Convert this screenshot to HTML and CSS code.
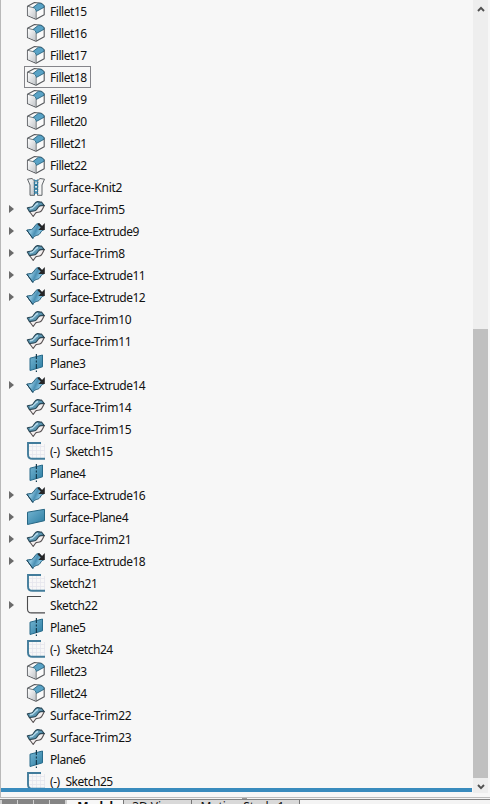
FILE: index.html
```html
<!DOCTYPE html>
<html lang="en">
<head>
<meta charset="utf-8">
<title>Feature tree</title>
<link rel="stylesheet" href="styles.css">
</head>
<body>
<svg class="defs" width="0" height="0">
  <defs>
    <linearGradient id="blue" x1="0" y1="0" x2="1" y2="1"><stop offset="0" stop-color="#75b5d2"/><stop offset="1" stop-color="#2c7da2"/></linearGradient>
    <linearGradient id="wave" x1="0" y1="0.2" x2="1" y2="0.6"><stop offset="0" stop-color="#3f86a8"/><stop offset=".3" stop-color="#8cc4df"/><stop offset=".55" stop-color="#4a90b4"/><stop offset=".8" stop-color="#84c2e0"/><stop offset="1" stop-color="#3d86aa"/></linearGradient>
    <linearGradient id="side" x1="0" y1="0" x2="1" y2="1"><stop offset="0" stop-color="#fff"/><stop offset="1" stop-color="#bfc3c7"/></linearGradient>
  </defs>
  <symbol id="fillet" viewBox="0 0 20 20">
    <path d="M1.500 5.200 8.500 1.500l6.500.7 3.200 2.700v8.800L10 18.300l-8.500-3.800z" fill="#fafafa" stroke="#55585c" stroke-width="1.100" stroke-linejoin="round"/>
    <path d="M1.800 5.600 7.500 7.300 10 10.300v7.500l-8.200-3.500z" fill="url(#side)"/>
    <path d="M7 6.500 12.500 2.200c3.500-.1 5.400 1.300 5.700 4L10.200 10.500C10 8.500 9 7 7 6.500z" fill="#5aa3c6" stroke="#2a6480" stroke-width=".9"/>
    <path d="M2 5.400l5 1.200M10.200 10.500v7.500" fill="none" stroke="#6a6f73" stroke-width=".9"/>
  </symbol>
  <symbol id="knit" viewBox="0 0 20 20">
    <path d="M1.500 2.200 6 1.500l2.300 2.200.2 14.600H4V8z" fill="url(#side)" stroke="#61666a"/>
    <path d="M18.500 2.200 14 1.500l-2.300 2.200-.2 14.600H16V8z" fill="#f4f4f4" stroke="#61666a"/>
    <path d="M8 2.700l4.200 3M12 2.700l-4 3M8 6.500l4.200 3M12 6.500l-4 3M8 10.300l4.200 3M12 10.300l-4 3M8 14.100l4.200 3M12 14.100l-4 3" stroke="#287ca4" stroke-width="1.200"/>
  </symbol>
  <symbol id="trim" viewBox="0 0 20 20">
    <path d="M3.500 12.500c2.500-1.300 4 .2 5.500-2 1.500-2.200 3-4.500 5.500-4.200 1.500.2 2.500.5 4 .2-1.500 2-1.800 4.500-3.800 6-2 1.500-3.700-.1-5.200 1.700L7.200 17.500z" fill="#f4efef" stroke="#555051" stroke-width="1.100" stroke-linejoin="round"/>
    <path d="M1.300 9c2-1.500 4 .1 5.500-1.700C8.300 5.500 9 3 11.300 2.600c1.700-.2 2.500.9 4.200.4l2.700 3.500c-2.700-.4-4.700-.4-6 1.700-1.500 2.500-2.200 4-4.700 3.800-1.500-.1-2.500 0-4 .7z" fill="#5c97b3" stroke="#2a4756" stroke-width="1.100" stroke-linejoin="round"/>
    <path d="M4 9.800c4.500.2 4.500-4.600 8-5.200" fill="none" stroke="#b4d8e8" stroke-width="1.500"/>
  </symbol>
  <symbol id="extrude" viewBox="0 0 20 20">
    <path d="M.8 9.200c2.200-1.200 4.400.3 6.200-1.700 1.700-2 2.500-4.500 5-4.900l1.500.2 4.300 6.100c-2.700.2-3 3.300-4.900 4.700-2 1.300-3.700.2-6.100 3.900z" fill="url(#wave)" stroke="#28607c" stroke-width="1" stroke-linejoin="round"/>
    <path d="M6.800 17.400.8 9.200" stroke="#1f4459" stroke-width="1"/>
    <path d="m12.300 2.700 4.200 4" stroke="#252527" stroke-width="2"/>
    <path d="M18.800 2v7h-6.500z" fill="#252527"/>
  </symbol>
  <symbol id="plane" viewBox="0 0 20 20">
    <path d="M4 5.200 16.500 2v11.800L4 17.500z" fill="url(#blue)" stroke="#286b8b"/>
    <path d="M10.400 1v18" stroke="#153c50" stroke-width="1.200" stroke-dasharray="5 1.500 2 1.500"/>
  </symbol>
  <symbol id="surface" viewBox="0 0 20 20">
    <path d="M1.500 5.200 18.500 2.300v11.400l-17 3.800z" fill="url(#blue)" stroke="#286784"/>
  </symbol>
  <symbol id="sketch" viewBox="0 0 20 20">
    <path d="M6.500 3v14M10.500 3v14M14.500 3v14M18.500 3v14M2 5.500h17M2 9.500h17M2 13.500h17" stroke="#e4e4ec" stroke-width=".8"/>
    <path d="M15 2H2v11.500c0 3 1.500 4.300 4.500 4.300H19" fill="none" stroke="#427c9b" stroke-width="1.900"/>
  </symbol>
  <symbol id="used" viewBox="0 0 20 20">
    <path d="M15 1.500H1.500V14c0 2.600 1.400 3.900 4 3.900H19" fill="none" stroke="#4b4b4d" stroke-width="1.100"/>
  </symbol>
</svg>
<div class="app">
  <main class="panel">
    <ul class="tree">
      <li><i></i><svg><use href="#fillet"/></svg><span>Fillet15</span></li>
      <li><i></i><svg><use href="#fillet"/></svg><span>Fillet16</span></li>
      <li><i></i><svg><use href="#fillet"/></svg><span>Fillet17</span></li>
      <li><i></i><div class="focused"><svg><use href="#fillet"/></svg><span>Fillet18</span></div></li>
      <li><i></i><svg><use href="#fillet"/></svg><span>Fillet19</span></li>
      <li><i></i><svg><use href="#fillet"/></svg><span>Fillet20</span></li>
      <li><i></i><svg><use href="#fillet"/></svg><span>Fillet21</span></li>
      <li><i></i><svg><use href="#fillet"/></svg><span>Fillet22</span></li>
      <li class="trim"><i></i><svg><use href="#knit"/></svg><span>Surface-Knit2</span></li>
      <li class="parent trim"><i></i><svg><use href="#trim"/></svg><span>Surface-Trim5</span></li>
      <li class="parent extrude"><i></i><svg><use href="#extrude"/></svg><span>Surface-Extrude9</span></li>
      <li class="parent trim"><i></i><svg><use href="#trim"/></svg><span>Surface-Trim8</span></li>
      <li class="parent extrude"><i></i><svg><use href="#extrude"/></svg><span>Surface-Extrude11</span></li>
      <li class="parent extrude"><i></i><svg><use href="#extrude"/></svg><span>Surface-Extrude12</span></li>
      <li class="trim"><i></i><svg><use href="#trim"/></svg><span>Surface-Trim10</span></li>
      <li class="trim"><i></i><svg><use href="#trim"/></svg><span>Surface-Trim11</span></li>
      <li><i></i><svg><use href="#plane"/></svg><span>Plane3</span></li>
      <li class="parent extrude"><i></i><svg><use href="#extrude"/></svg><span>Surface-Extrude14</span></li>
      <li class="trim"><i></i><svg><use href="#trim"/></svg><span>Surface-Trim14</span></li>
      <li class="trim"><i></i><svg><use href="#trim"/></svg><span>Surface-Trim15</span></li>
      <li><i></i><svg><use href="#sketch"/></svg><span>(-) Sketch15</span></li>
      <li><i></i><svg><use href="#plane"/></svg><span>Plane4</span></li>
      <li class="parent extrude"><i></i><svg><use href="#extrude"/></svg><span>Surface-Extrude16</span></li>
      <li class="parent"><i></i><svg><use href="#surface"/></svg><span>Surface-Plane4</span></li>
      <li class="parent trim"><i></i><svg><use href="#trim"/></svg><span>Surface-Trim21</span></li>
      <li class="parent extrude"><i></i><svg><use href="#extrude"/></svg><span>Surface-Extrude18</span></li>
      <li><i></i><svg><use href="#sketch"/></svg><span>Sketch21</span></li>
      <li class="parent"><i></i><svg><use href="#used"/></svg><span>Sketch22</span></li>
      <li><i></i><svg><use href="#plane"/></svg><span>Plane5</span></li>
      <li><i></i><svg><use href="#sketch"/></svg><span>(-) Sketch24</span></li>
      <li><i></i><svg><use href="#fillet"/></svg><span>Fillet23</span></li>
      <li><i></i><svg><use href="#fillet"/></svg><span>Fillet24</span></li>
      <li class="trim"><i></i><svg><use href="#trim"/></svg><span>Surface-Trim22</span></li>
      <li class="trim"><i></i><svg><use href="#trim"/></svg><span>Surface-Trim23</span></li>
      <li><i></i><svg><use href="#plane"/></svg><span>Plane6</span></li>
      <li><i></i><svg><use href="#sketch"/></svg><span>(-) Sketch25</span></li>
    </ul>
    <div class="scrollbar">
      <svg class="arrow up" viewBox="0 0 8 6"><path d="M1 5 4 1.800 7 5"/></svg>
      <div class="track"><div class="thumb"></div></div>
      <svg class="arrow down" viewBox="0 0 8 6"><path d="M1 1 4 4.200 7 1"/></svg>
    </div>
  </main>
  <div class="splitter"><b></b></div>
  <footer class="tabs">
    <div class="nav"><b></b><b></b><b></b><b></b></div>
    <div class="tab model">Model</div>
    <div class="tab views">3D Views</div>
    <div class="tab motion">Motion Study 1</div>
  </footer>
</div>
</body>
</html>
```
FILE: styles.css
```css
* { box-sizing: border-box; }
body { margin: 0; background: #f7f7f7; color: #111; font: 12px/22px "Noto Sans", "Open Sans", sans-serif; }
.defs { display: block; }
.app { display: flex; flex-direction: column; width: 490px; height: 804px; overflow: hidden; }
.panel { display: flex; height: 797px; border-left: 1px solid #b9b9b9; }
.tree { width: 471px; height: 792px; margin: 0; padding: 1px 0 0; list-style: none; overflow: hidden; border-bottom: 4px solid #398bbd; }
.tree li { display: flex; height: 22px; align-items: center; }
.tree i { width: 25px; height: 22px; flex: none; display: flex; align-items: center; padding: 0 0 2px 8px; }
.parent i::before { content: ""; border: 4px solid transparent; border-left: 5px solid #6a6a6a; border-right: 0; }
.tree svg { width: 20px; height: 20px; flex: none; margin-top: -2px; }
.tree span { margin-left: 4px; white-space: nowrap; letter-spacing: -0.45px; word-spacing: 3px; }
.tree .trim span { letter-spacing: -0.24px; }
.tree .extrude span { letter-spacing: -0.51px; }
.focused { display: flex; align-items: center; height: 22px; width: 67px; margin: -2px 0 0 -2px; padding: 1px 0 0 1px; border: 1px solid #85858a; }
.scrollbar { width: 15px; height: 793px; margin-left: 1px; background: #eee; display: flex; flex-direction: column; align-items: center; }
.arrow { width: 8px; height: 6px; flex: none; fill: none; stroke: #505050; stroke-width: 1.900; }
.up { margin: 6px 0 4px; }
.down { margin: 6px 0 4px; }
.track { flex: 1; width: 15px; padding-top: 313px; }
.thumb { height: 449px; background: #c0c0c0; }
.splitter { height: 3px; flex: none; border-top: 1px solid #bcbcbc; border-bottom: 1px solid #858585; background: #f5f5f5; display: flex; }
.splitter b { width: 5px; height: 1px; margin-left: 242px; background: #999; }
.tabs { display: flex; height: 4px; overflow: hidden; background: #f4f4f4; font: 12px/14px "Noto Sans", sans-serif; }
.nav { width: 67px; display: flex; gap: 1px; padding-left: 2px; background: #d0d0d0; }
.nav b { width: 15px; background: #858585; }
.tab { height: 16px; border-right: 1px solid #777; background: #d9d9d9; text-align: center; white-space: nowrap; flex: none; }
.model { width: 57px; background: #f7f7f7; font-weight: bold; letter-spacing: -.3px; }
.views { width: 68px; }
.motion { width: 108px; padding-right: 6px; letter-spacing: -.1px; }
```
